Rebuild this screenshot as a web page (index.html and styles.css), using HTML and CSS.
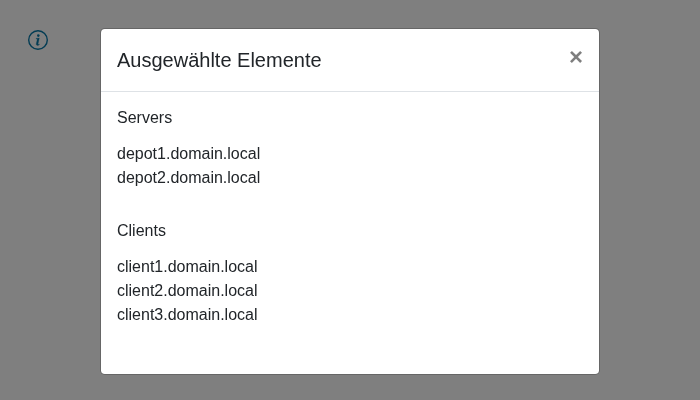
FILE: index.html
```html
<!DOCTYPE html>
<html lang="de">
<head>
<meta charset="utf-8">
<title>Ausgewählte Elemente</title>
<link rel="stylesheet" href="styles.css">
</head>
<body>
<button class="info" aria-label="Info">
<svg width="20" height="20" viewBox="0 0 20 20"><circle cx="10" cy="10" r="9.3" fill="none" stroke="currentColor" stroke-width="1.4"/><circle cx="10.3" cy="5.6" r="1.3" fill="currentColor"/><path d="M8.100 8.400L11.300 8 10.100 13.700c-.1.500 0 .8.400.8.300 0 .6-.1.900-.4l-.2.600c-.3.400-.9.700-1.600.7-1.100 0-1.600-.7-1.300-1.800l.9-3.900c.1-.4 0-.6-.4-.65l-.7-.1z" fill="currentColor" stroke="currentColor" stroke-width=".3"/></svg>
</button>
<div class="backdrop">
<section class="modal" role="dialog">
<header class="modal-header">
<h5 class="title">Ausgewählte Elemente</h5>
<button class="close" aria-label="Close">×</button>
</header>
<div class="modal-body">
<h6 class="group">Servers</h6>
<ul class="items"><li>depot1.domain.local</li><li>depot2.domain.local</li></ul>
<h6 class="group">Clients</h6>
<ul class="items"><li>client1.domain.local</li><li>client2.domain.local</li><li>client3.domain.local</li></ul>
</div>
</section>
</div>
</body>
</html>
```
FILE: styles.css
```css
* { box-sizing: border-box; }
body {
  margin: 0;
  height: 400px;
  padding: 30px 28px;
  overflow: hidden;
  background: #fff;
  color: #212529;
  font: 16px/24px "Liberation Sans", Arial, sans-serif;
}
button { padding: 0; border: 0; background: none; }
.info { display: block; color: #0678a8; }
.info svg { display: block; }
.backdrop {
  position: fixed;
  inset: 0;
  padding-top: 28px;
  background: rgba(0, 0, 0, .5);
}
.modal {
  width: 500px;
  height: 347px;
  margin: 0 auto;
  background: #fff;
  background-clip: padding-box;
  border: 1px solid rgba(0, 0, 0, .2);
  border-radius: 4.8px;
}
.modal-header {
  display: flex;
  justify-content: space-between;
  align-items: flex-start;
  height: 63px;
  padding: 16px;
  border-bottom: 1px solid #dee2e6;
}
.title { margin: 0; font-size: 20px; line-height: 30px; font-weight: 400; }
.close {
  margin: -16px -16px -16px auto;
  padding: 16px;
  color: #000;
  font: 700 24px/24px "Liberation Sans", Arial, sans-serif;
  opacity: .5;
}
.modal-body { padding: 16px; }
.group { margin: 0 0 15px; font-size: 16px; line-height: 19px; font-weight: 400; }
.items { margin: 0 0 31px; padding: 0; list-style: none; }
```
